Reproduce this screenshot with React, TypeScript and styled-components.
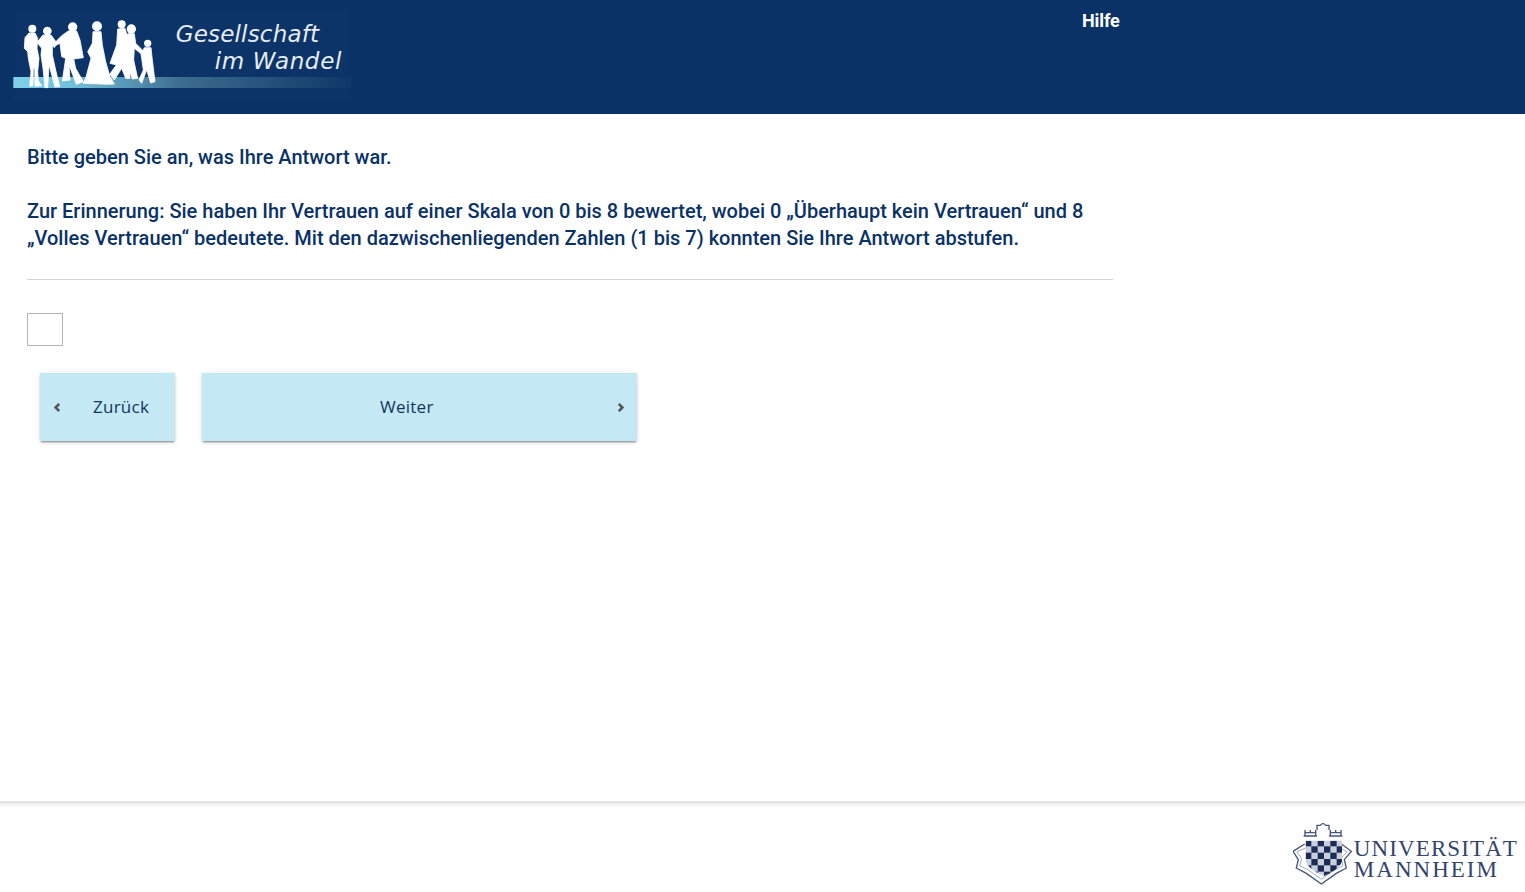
import React from "react";
import styled, { createGlobalStyle } from "styled-components";

const Global = createGlobalStyle`
  html, body { margin: 0; padding: 0; background: #fff; }
  body { font-family: Roboto, "Liberation Sans", sans-serif; overflow: hidden; }
`;
const Page = styled.div`
  height: 892px;
  display: flex;
  flex-direction: column;
`;
const Header = styled.header`
  height: 114px;
  flex: none;
  background: #0a3266;
  display: flex;
  align-items: flex-start;
`;
const LogoSvg = styled.svg`
  width: 370px;
  height: 114px;
  flex: none;
  display: block;
`;
const HelpLink = styled.a`
  margin-left: 712px;
  margin-top: 9px;
  color: #fff;
  font-size: 18px;
  font-weight: 700;
  line-height: 24px;
  letter-spacing: -0.12px;
`;
const Main = styled.main`
  flex: 1;
  padding: 30px 0 0 27px;
`;
const Question = styled.div`
  width: 1086px;
  padding-bottom: 27px;
  border-bottom: 1px solid #d4d4d4;
  color: #0a3266;
  font-size: 20px;
  font-weight: 500;
  line-height: 27px;
`;
const Paragraph = styled.p`
  margin: 0 0 27px;
  &:last-child { margin-bottom: 0; }
`;
const AnswerInput = styled.input`
  display: block;
  box-sizing: border-box;
  width: 36px;
  height: 33px;
  margin-top: 33px;
  border: 1px solid #b5b5b5;
  background: #fff;
  padding: 0;
  outline: none;
`;
const Buttons = styled.div`
  display: flex;
  gap: 27px;
  margin: 27px 0 0 13px;
`;
const NavButton = styled.button<{ $width: number }>`
  position: relative;
  width: ${(p) => p.$width}px;
  height: 68px;
  border: 0;
  border-radius: 0;
  padding: 0 0 2px;
  background: #c5e8f5;
  color: #10365f;
  font-family: "Open Sans", "Noto Sans", sans-serif;
  font-size: 17px;
  letter-spacing: 0.25px;
  box-shadow: 0 2px 2px -1px rgba(0, 0, 0, 0.45), 0 1px 4px rgba(0, 0, 0, 0.14);
  display: flex;
  align-items: center;
`;
const Label = styled.span<{ $left: number }>`
  margin-left: ${(p) => p.$left}px;
`;
const ChevronSvg = styled.svg<{ $side: "left" | "right" }>`
  position: absolute;
  top: 29px;
  ${(p) => (p.$side === "left" ? "left: 13px;" : "right: 12px;")}
  width: 8px;
  height: 11px;
`;
const Footer = styled.footer`
  height: 91px;
  flex: none;
  box-sizing: border-box;
  background: #fff;
  background-image: linear-gradient(#dedede, #f4f4f4 4px, #ffffff 8px);
  display: flex;
  justify-content: flex-end;
  padding: 20px 7px 0 0;
`;
const Brand = styled.div`
  display: flex;
  align-items: flex-start;
  gap: 1px;
`;
const Crest = styled.svg`
  width: 60px;
  height: 66px;
  flex: none;
`;
const Wordmark = styled.div`
  padding-top: 17px;
  color: #34446c;
  font-family: "Liberation Serif", serif;
  font-size: 23px;
  line-height: 21px;
`;
const WordLine = styled.div<{ $spacing: number }>`
  letter-spacing: ${(p) => p.$spacing}px;
  white-space: nowrap;
`;

const people = [
  "M42 54L60 54L68 70L66 100L72 130L68 170L70 198L80 212L60 214L59 160L55 160L54 212L44 214L48 170L40 130L38 110L28 100L30 68Z",
  "M84 60L108 60L126 85L118 98L112 90L112 120L122 165L134 215L120 216L102 150L98 218L90 218L84 160L78 120L80 100L66 82Z",
  "M160 48L185 48L195 75L205 128L176 132L182 160L205 200L184 208L162 150L165 195L142 198L152 130L140 125L135 85L120 92L118 85L140 62Z",
  "M234 50L258 50L262 90L272 140L285 185L298 207L278 208L205 205L212 190L228 130L218 110L232 85Z",
  "M308 42L330 40L340 75L340 130L345 190L332 190L320 160L298 195L284 178L304 150L285 145L305 90Z",
  "M338 56L358 56L362 85L385 108L380 118L358 100L356 135L368 190L352 192L335 150Z",
  "M388 98L408 98L412 135L420 200L407 204L395 165L380 205L372 195L385 165L380 130L378 118Z",
];
const heads: [number, number, number][] = [
  [52, 41, 12], [97, 48, 13], [173, 36, 14], [246, 34, 15], [320, 28, 12], [349, 42, 14], [398, 85, 11],
];

const shieldPath = "M48 68H157V130Q150 155 103 174Q56 155 48 130Z";
const checks: { x: number; y: number }[] = [];
for (let r = 0; r < 6; r++) {
  for (let c = 0; c < 6; c++) {
    if ((r + c) % 2 === 1) continue;
    checks.push({ x: 46 + c * 19, y: 66 + r * 19 });
  }
}

function Logo() {
  return (
    <LogoSvg viewBox="0 0 1110 342" aria-label="Gesellschaft im Wandel">
      <defs>
        <linearGradient id="band" x1="0" x2="1" y1="0" y2="0">
          <stop offset="0" stopColor="#7fd0e8" />
          <stop offset="0.18" stopColor="#70c0da" />
          <stop offset="0.5" stopColor="#3c6c8e" />
          <stop offset="1" stopColor="#0f3768" />
        </linearGradient>
        <filter id="soft"><feGaussianBlur stdDeviation="1.2" /></filter>
      </defs>
      <rect x="40" y="30" width="1015" height="270" fill="#0c3468" />
      <rect x="40" y="231" width="1015" height="33" fill="url(#band)" />
      <g fill="#fff" stroke="#fff" strokeWidth="2.5" strokeLinejoin="round" transform="translate(45 45)" filter="url(#soft)">
        {people.map((d) => <path key={d} d={d} />)}
        {heads.map(([cx, cy, r]) => <circle key={cx} cx={cx} cy={cy} r={r} stroke="none" />)}
      </g>
      <g fill="#e6edf3" fontFamily="'DejaVu Sans', sans-serif" fontStyle="italic" fontSize="69">
        <text x="527" y="127" textLength="430">Gesellschaft</text>
        <text x="644" y="207" textLength="380">im Wandel</text>
      </g>
    </LogoSvg>
  );
}

function MannheimCrest() {
  return (
    <Crest viewBox="40 78 180 198">
      <defs>
        <clipPath id="shield"><path d={shieldPath} /></clipPath>
      </defs>
      <g transform="translate(30 69)">
        <g fill="none" stroke="#44547c" strokeWidth="4">
          <path d="M46 36V52M46 44H78M78 36V52M62 44V36M42 54H82" />
          <path d="M122 36V52M122 44H154M154 36V52M138 44V36M118 54H158" />
          <path d="M82 36V22H92Q100 12 108 22H118V36" />
          <path d="M45 78L10 100L26 125L20 150L50 166L95 198L140 166L170 150L164 125L185 100L155 78" />
          <path d="M48 90L22 101L36 122L30 143L56 156L95 184L134 156L160 143L154 122L172 101L150 90" strokeWidth="2.5" stroke="#8f9ab3" />
        </g>
        <path d={shieldPath} fill="#c8cfdd" />
        <g clipPath="url(#shield)" fill="#1d2b55">
          {checks.map((s) => (
            <rect key={`${s.x}-${s.y}`} x={s.x} y={s.y} width="19" height="19" />
          ))}
        </g>
      </g>
    </Crest>
  );
}

export default function App() {
  return (
    <Page>
      <Global />
      <Header>
        <Logo />
        <HelpLink>Hilfe</HelpLink>
      </Header>
      <Main>
        <Question>
          <Paragraph>Bitte geben Sie an, was Ihre Antwort war.</Paragraph>
          <Paragraph>
            Zur Erinnerung: Sie haben Ihr Vertrauen auf einer Skala von 0 bis 8 bewertet, wobei 0 „Überhaupt kein Vertrauen“ und 8 „Volles Vertrauen“ bedeutete. Mit den dazwischenliegenden Zahlen (1 bis 7) konnten Sie Ihre Antwort abstufen.
          </Paragraph>
        </Question>
        <AnswerInput type="text" aria-label="Antwort" />
        <Buttons>
          <NavButton $width={135}>
            <ChevronSvg $side="left" viewBox="0 0 8 11">
              <path d="M6.2 1.8L2.6 5.5L6.2 9.2" fill="none" stroke="#555" strokeWidth="2.6" />
            </ChevronSvg>
            <Label $left={53}>Zurück</Label>
          </NavButton>
          <NavButton $width={435}>
            <Label $left={178}>Weiter</Label>
            <ChevronSvg $side="right" viewBox="0 0 8 11">
              <path d="M1.8 1.8L5.4 5.5L1.8 9.2" fill="none" stroke="#555" strokeWidth="2.6" />
            </ChevronSvg>
          </NavButton>
        </Buttons>
      </Main>
      <Footer>
        <Brand>
          <MannheimCrest />
          <Wordmark>
            <WordLine $spacing={1.1}>UNIVERSITÄT</WordLine>
            <WordLine $spacing={2}>MANNHEIM</WordLine>
          </Wordmark>
        </Brand>
      </Footer>
    </Page>
  );
}
